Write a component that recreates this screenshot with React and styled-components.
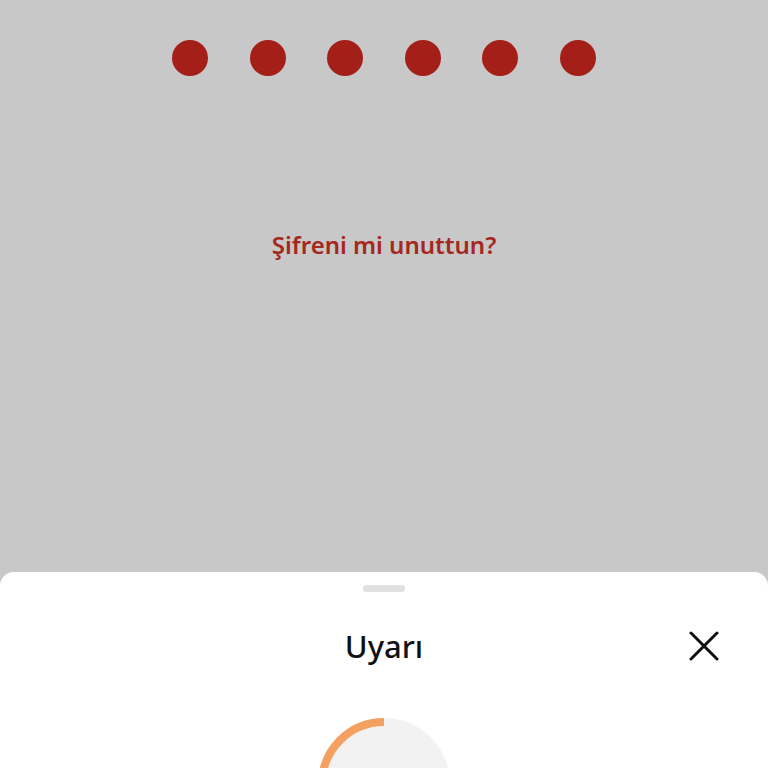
import React from "react";
import styled, { createGlobalStyle } from "styled-components";

const Global = createGlobalStyle`
  html, body { margin: 0; padding: 0; }
  body { font-family: "Noto Sans", sans-serif; background: #c8c8c8; }
`;

const Screen = styled.div`
  width: 768px;
  height: 768px;
  display: flex;
  flex-direction: column;
  overflow: hidden;
  background: #c8c8c8;
`;

const Backdrop = styled.div`
  flex: 1;
  display: flex;
  flex-direction: column;
  align-items: center;
  padding-top: 40px;
`;

const Dots = styled.div`
  display: flex;
  gap: 41.6px;
`;

const Dot = styled.span`
  width: 36px;
  height: 36px;
  border-radius: 50%;
  background: #a31f17;
`;

const ForgotLink = styled.a`
  margin-top: 152px;
  font-family: "Noto Sans", sans-serif;
  font-weight: 600;
  font-size: 24px;
  line-height: 34px;
  color: #a52820;
  text-decoration: none;
`;

const Sheet = styled.div`
  height: 196px;
  flex-shrink: 0;
  background: #ffffff;
  border-radius: 14px 14px 0 0;
  display: flex;
  flex-direction: column;
  align-items: center;
  overflow: hidden;
  & > * { flex-shrink: 0; }
`;

const Handle = styled.div`
  margin-top: 13px;
  width: 42px;
  height: 7px;
  border-radius: 4px;
  background: #e0e0e0;
`;

const Header = styled.div`
  align-self: stretch;
  display: grid;
  grid-template-columns: 1fr auto 1fr;
  align-items: center;
  margin-top: 36px;
  padding: 0 48px;
`;

const Title = styled.h2`
  grid-column: 2;
  margin: 0;
  font-family: "Noto Sans", sans-serif;
  font-weight: 500;
  font-size: 31px;
  line-height: 36px;
  color: #111;
`;

const CloseButton = styled.button`
  grid-column: 3;
  justify-self: end;
  border: 0;
  background: none;
  padding: 0;
  width: 32px;
  height: 32px;
  display: flex;
  align-items: center;
  justify-content: center;
`;

const Progress = styled.svg`
  margin-top: 54px;
`;

export default function App() {
  return (
    <>
      <Global />
      <Screen>
        <Backdrop>
          <Dots>
            {Array.from({ length: 6 }).map((_, i) => (
              <Dot key={i} />
            ))}
          </Dots>
          <ForgotLink>Şifreni mi unuttun?</ForgotLink>
        </Backdrop>
        <Sheet>
          <Handle />
          <Header>
            <Title>Uyarı</Title>
            <CloseButton aria-label="Kapat">
              <svg width="30" height="30" viewBox="0 0 30 30">
                <path d="M2 2 L28 28 M28 2 L2 28" stroke="#111" strokeWidth="3" strokeLinecap="round" fill="none" />
              </svg>
            </CloseButton>
          </Header>
          <Progress width="132" height="132" viewBox="0 0 132 132">
            <circle cx="66" cy="66" r="66" fill="#f2f2f2" />
            <path d="M66 4 A62 62 0 0 0 4 66" stroke="#f4a060" strokeWidth="8" fill="none" />
          </Progress>
        </Sheet>
      </Screen>
    </>
  );
}
